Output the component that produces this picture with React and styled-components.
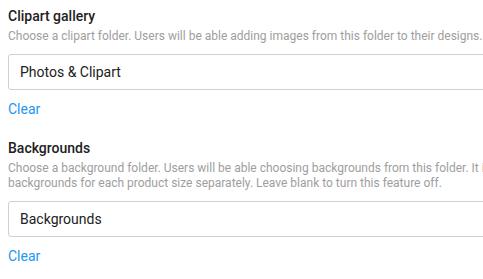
import React from "react";
import styled, { createGlobalStyle } from "styled-components";

const Global = createGlobalStyle`
  html, body { margin: 0; padding: 0; background: #fff; overflow: hidden; }
  body { font-family: Roboto, "Liberation Sans", Arial, sans-serif; }
`;

const Page = styled.div`
  width: 640px;
  padding: 8px 8px 0 8px;
`;

const Field = styled.section`
  display: flex;
  flex-direction: column;
  margin-bottom: 23px;
`;

const Title = styled.h3`
  margin: 0;
  font-size: 14px;
  font-weight: 500;
  color: #212121;
  line-height: normal;
`;

const Hint = styled.p`
  margin: 5px 0 0 0;
  font-size: 12px;
  line-height: 15px;
  color: #9e9e9e;
`;

const Input = styled.input`
  box-sizing: border-box;
  margin-top: 10px;
  width: 100%;
  height: 36px;
  padding: 0 11px;
  border: 1px solid #d0d0d0;
  border-radius: 3px;
  font-family: inherit;
  font-size: 14px;
  color: #212121;
  background: #fff;
  outline: none;
`;

const ClearLink = styled.a`
  align-self: flex-start;
  margin-top: 11px;
  font-size: 14px;
  line-height: normal;
  color: #2196f3;
  text-decoration: none;
  cursor: pointer;
`;

function FolderField({ title, hint, value }) {
  return (
    <Field>
      <Title>{title}</Title>
      <Hint>{hint}</Hint>
      <Input readOnly value={value} />
      <ClearLink>Clear</ClearLink>
    </Field>
  );
}

export default function App() {
  return (
    <>
      <Global />
      <Page>
        <FolderField
          title="Clipart gallery"
          hint="Choose a clipart folder. Users will be able adding images from this folder to their designs."
          value="Photos & Clipart"
        />
        <FolderField
          title="Backgrounds"
          hint="Choose a background folder. Users will be able choosing backgrounds from this folder. It is possible to set different backgrounds for each product size separately. Leave blank to turn this feature off."
          value="Backgrounds"
        />
      </Page>
    </>
  );
}
